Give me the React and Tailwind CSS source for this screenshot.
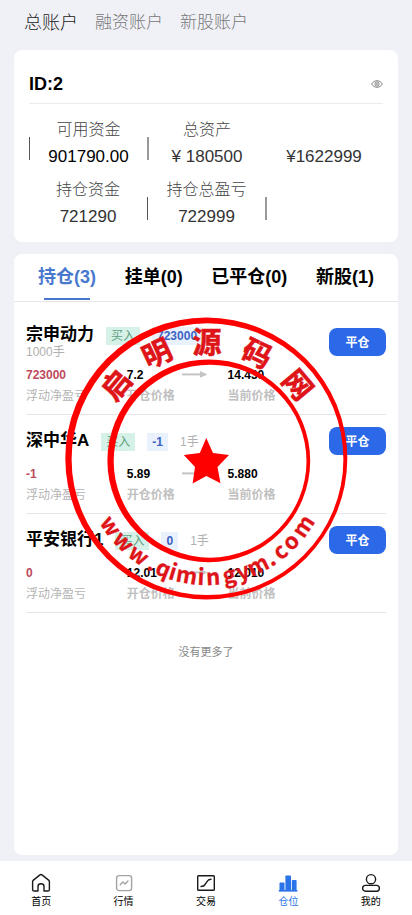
import { useState } from "react";
import clsx from "clsx";

const accounts = ["总账户", "融资账户", "新股账户"];

const stats = [
  [
    { label: "可用资金", value: "901790.00", divider: "w-px bg-[#555]", strong: true },
    { label: "总资产", value: "¥ 180500", divider: "w-0.5 bg-[#999]" },
    { label: "", value: "¥1622999" },
  ],
  [
    { label: "持仓资金", value: "721290" },
    { label: "持仓总盈亏", value: "722999", divider: "w-px bg-[#555]" },
    { label: "", value: "", divider: "w-0.5 bg-[#999]" },
  ],
];

const tabs = ["持仓(3)", "挂单(0)", "已平仓(0)", "新股(1)"];

const positions = [
  { name: "宗申动力", change: "723000", lots: "1000手", profit: "723000", open: "7.2", current: "14.430" },
  { name: "深中华A", change: "-1", lots: "1手", profit: "-1", open: "5.89", current: "5.880" },
  { name: "平安银行1", change: "0", lots: "1手", profit: "0", open: "12.01", current: "12.010" },
];

const navItems = [
  { label: "首页", Icon: HomeIcon },
  { label: "行情", Icon: MarketIcon },
  { label: "交易", Icon: TradeIcon },
  { label: "仓位", Icon: BarsIcon, active: true },
  { label: "我的", Icon: UserIcon },
];

// angle of each glyph around the stamp, 0 is straight up / straight down
const stampTitle = [
  ["启", -50],
  ["明", -25],
  ["源", 0],
  ["码", 25],
  ["网", 50],
];

const stampUrl = [
  ["w", 56], ["w", 46], ["w", 36], [".", 28], ["q", 22], ["i", 17], ["m", 10], ["i", 3],
  ["n", -3], ["g", -11], ["y", -18], ["m", -26], [".", -33], ["c", -39], ["o", -46], ["m", -56],
];

function HomeIcon() {
  return (
    <svg width="20" height="20" viewBox="0 0 20 20" fill="none" stroke="#1a1a1a" strokeWidth="1.4" strokeLinejoin="round">
      <path d="M1.6 8.8 Q1.6 7.8 2.4 7.1 L9 1.9 Q10 1.2 11 1.9 L17.6 7.1 Q18.4 7.8 18.4 8.8 V16.4 Q18.4 18 16.8 18 H13 V13.4 Q13 10.8 10 10.8 Q7 10.8 7 13.4 V18 H3.2 Q1.6 18 1.6 16.4 Z" />
    </svg>
  );
}

function MarketIcon() {
  return (
    <svg width="20" height="20" viewBox="0 0 20 20" fill="none" stroke="#a3a3a3" strokeWidth="1.4" strokeLinecap="round" strokeLinejoin="round">
      <rect x="2.6" y="2.6" width="15" height="15" rx="2.6" />
      <path d="M6.2 11.8 L8.8 9 L11 11 L14 8" />
    </svg>
  );
}

function TradeIcon() {
  return (
    <svg width="20" height="20" viewBox="0 0 20 20" fill="none" stroke="#1a1a1a" strokeWidth="1.4" strokeLinecap="round" strokeLinejoin="round">
      <rect x="1.7" y="2.7" width="16.6" height="14.6" rx="0.8" />
      <path d="M5 13.5 C9.5 13.5 8.5 11.5 10 10 C11.5 8 11.5 6.5 15 6.3" />
    </svg>
  );
}

function BarsIcon() {
  return (
    <svg width="20" height="20" viewBox="0 0 20 20" fill="#2b73e8">
      <rect x="1.5" y="9.6" width="5" height="8.4" rx="0.8" />
      <rect x="7.4" y="2.4" width="5.6" height="15.6" rx="0.8" />
      <rect x="13.8" y="7" width="4.8" height="11" rx="0.8" />
      <rect x="0.8" y="17" width="18.6" height="1.6" />
    </svg>
  );
}

function UserIcon() {
  return (
    <svg width="20" height="20" viewBox="0 0 20 20" fill="none" stroke="#1a1a1a" strokeWidth="1.4">
      <circle cx="10" cy="6.2" r="4.6" />
      <rect x="1.6" y="12.4" width="16.8" height="5.8" rx="2.9" />
    </svg>
  );
}

function EyeIcon() {
  return (
    <svg width="12" height="12" viewBox="0 0 12 12" fill="none" stroke="#666" strokeWidth="0.8">
      <path d="M0.6 6 C3 1.6 9 1.6 11.4 6 C9 10.4 3 10.4 0.6 6 Z" />
      <circle cx="6" cy="6" r="2.1" />
      <circle cx="6" cy="6" r="0.5" />
    </svg>
  );
}

function Arrow() {
  return (
    <svg width="26" height="8" viewBox="0 0 26 8" fill="#c4c4c4">
      <rect x="0" y="2.4" width="20" height="2" />
      <path d="M18 0 L25.5 3.4 L18 6.8 Z" />
    </svg>
  );
}

function Stamp() {
  return (
    <div className="absolute inset-x-0 top-[317px] flex justify-center pointer-events-none">
      <svg width="283" height="283" viewBox="65 317 283 283" aria-hidden="true">
        <g fill="#ff0000" fillRule="evenodd">
          <path d="M65.3 458.5 a141 141 0 1 0 282 0 a141 141 0 1 0 -282 0 Z M71.6 459.2 a135.9 135.9 0 1 0 271.8 0 a135.9 135.9 0 1 0 -271.8 0 Z" />
          <path d="M107.4 460.8 a101.4 101.4 0 1 0 202.8 0 a101.4 101.4 0 1 0 -202.8 0 Z M113.7 461.2 a96.4 96.4 0 1 0 192.8 0 a96.4 96.4 0 1 0 -192.8 0 Z" />
          <path d="M206.3 438 L213 453 L229 455 L217.5 467 L220.5 483.3 L206.4 476 L192.6 483.4 L195 467 L183.8 455 L199.8 453 Z" />
        </g>
        <g fill="#de1418" stroke="#de1418" textAnchor="middle" className="font-['Noto_Sans_CJK_SC',sans-serif] font-bold">
          {stampTitle.map(([char, angle]) => (
            <text key={char} x="207" y="353" fontSize="29" strokeWidth="0.6" transform={`rotate(${angle} 207 461)`}>
              {char}
            </text>
          ))}
          {stampUrl.map(([char, angle], i) => (
            <text key={i} x="207" y="585" fontSize="22" strokeWidth="0.3" transform={`rotate(${angle} 207 461)`}>
              {char}
            </text>
          ))}
        </g>
      </svg>
    </div>
  );
}

function Position({ item }) {
  return (
    <li className="h-[99px] border-b border-[#e6e6e6] pt-3">
      <div className="flex h-7 items-center justify-between">
        <div className="flex w-3/5 flex-wrap items-baseline gap-x-3">
          <h2 className="text-[17px] leading-5 font-bold text-black">{item.name}</h2>
          <span className="bg-[#d6f2e8] px-[5px] text-xs leading-[18px] text-[#5fa07f]">买入</span>
          <span className="bg-[#e9f1fd] px-[5px] text-xs leading-[18px] font-bold text-[#3d63c4]">{item.change}</span>
          <span className="text-xs leading-[14px] text-[#b0b0b0]">{item.lots}</span>
        </div>
        <button type="button" className="h-7 w-[57px] rounded-lg bg-[#2c69e8] pt-0.5 text-xs font-bold text-white">
          平仓
        </button>
      </div>
      <dl className="mt-[9px] flex text-xs leading-[22px] text-[#b5b5b5]">
        <div className="flex w-[28%] flex-col-reverse">
          <dt>浮动净盈亏</dt>
          <dd className="leading-5 font-bold text-[#bd4a5c]">{item.profit}</dd>
        </div>
        <div className="flex w-[28%] flex-col-reverse">
          <dt className="font-bold text-[#c0c0c0]">开仓价格</dt>
          <dd className="flex items-center justify-between pr-5 leading-5 font-bold text-black">
            {item.open}
            <Arrow />
          </dd>
        </div>
        <div className="flex flex-col-reverse">
          <dt className="font-bold text-[#c0c0c0]">当前价格</dt>
          <dd className="leading-5 font-bold text-black">{item.current}</dd>
        </div>
      </dl>
    </li>
  );
}

export default function App() {
  const [account, setAccount] = useState(0);
  const [tab, setTab] = useState(0);

  return (
    <div className="relative flex min-h-screen flex-col bg-[#f0f1f6] font-['Liberation_Sans','Noto_Sans_CJK_SC',sans-serif]">
      {/* Account switch */}
      <div className="flex h-[46px] items-center gap-[17px] px-6">
        {accounts.map((name, i) => (
          <button
            key={name}
            type="button"
            onClick={() => setAccount(i)}
            className={clsx("font-light", account === i ? "text-lg text-[#222]" : "text-[17px] text-[#777]")}
          >
            {name}
          </button>
        ))}
      </div>

      {/* Balance card */}
      <section className="mx-[14px] mt-1 rounded-lg bg-white px-[15px] pb-[11px]">
        <div className="flex h-[54px] items-center justify-between border-b border-[#ebebeb] pt-3.5">
          <h1 className="text-lg font-bold text-black">ID:2</h1>
          <button type="button" aria-label="显示金额">
            <EyeIcon />
          </button>
        </div>
        <div className="mt-[13px] flex flex-col gap-1.5">
          {stats.map((row, i) => (
            <div key={i} className="grid grid-cols-3">
              {row.map((cell, j) => (
                <div key={j} className="flex items-end">
                  {cell.divider && <span className={clsx("mb-[11px] h-[23px]", cell.divider)} />}
                  <div className="flex-1 text-center">
                    <p className="h-[26px] text-base leading-[26px] font-light text-[#444]">{cell.label}</p>
                    <p className={clsx("text-[17px] leading-7", cell.strong ? "text-black" : "text-[#333]")}>{cell.value}</p>
                  </div>
                </div>
              ))}
            </div>
          ))}
        </div>
      </section>

      {/* Positions card */}
      <section className="mx-[14px] mt-3 mb-1.5 flex-1 rounded-lg bg-white">
        <div className="flex h-12 justify-between border-b border-[#e6e6e6] px-6">
          {tabs.map((name, i) => (
            <button
              key={name}
              type="button"
              onClick={() => setTab(i)}
              className={clsx("relative pb-0.5 text-lg font-bold", tab === i ? "text-[#4878cd]" : "text-black")}
            >
              {name}
              {tab === i && <span className="absolute inset-x-1.5 bottom-px h-0.5 bg-[#4878cd]" />}
            </button>
          ))}
        </div>
        <ul className="px-3 pt-3.5">
          {positions.map((item) => (
            <Position key={item.name} item={item} />
          ))}
        </ul>
        <p className="mt-[30px] text-center text-[11px] leading-[18px] text-[#888]">没有更多了</p>
      </section>

      {/* Bottom navigation */}
      <nav className="grid h-[54px] grid-cols-5 bg-white">
        {navItems.map(({ label, Icon, active }) => (
          <a
            key={label}
            href="#"
            className={clsx("flex flex-col items-center pt-3 text-[10px] leading-[18px]", active ? "text-[#2b73e8]" : "text-black")}
          >
            <Icon />
            {label}
          </a>
        ))}
      </nav>

      <Stamp />
    </div>
  );
}
